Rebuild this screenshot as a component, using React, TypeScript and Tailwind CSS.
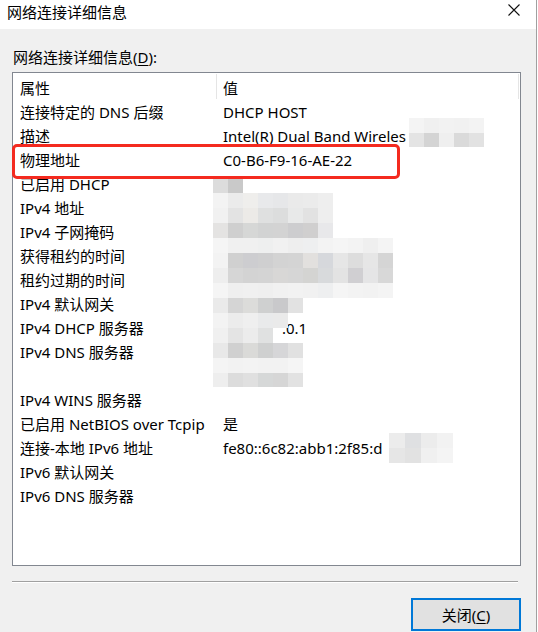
import React from "react";

const font = "font-['Segoe_UI','Noto_Sans','Noto_Sans_CJK_SC',sans-serif]";

const rows: [string, string][] = [
  ["连接特定的 DNS 后缀", "DHCP HOST"],
  ["描述", "Intel(R) Dual Band Wireles"],
  ["物理地址", "C0-B6-F9-16-AE-22"],
  ["已启用 DHCP", ""],
  ["IPv4 地址", ""],
  ["IPv4 子网掩码", ""],
  ["获得租约的时间", ""],
  ["租约过期的时间", ""],
  ["IPv4 默认网关", ""],
  ["IPv4 DHCP 服务器", ""],
  ["IPv4 DNS 服务器", ""],
  ["", ""],
  ["IPv4 WINS 服务器", ""],
  ["已启用 NetBIOS over Tcpip", "是"],
  ["连接-本地 IPv6 地址", "fe80::6c82:abb1:2f85:d"],
  ["IPv6 默认网关", ""],
  ["IPv6 DNS 服务器", ""],
];

// mosaic blocks over the hidden values: [x, y, cell width, cell height, colours]
const mosaic: [number, number, number, number, string[]][] = [
  [409, 118, 15, 15, ["#f4f4f4", "#f0f0f0", "#f2f2f2", "#f1f1f1", "#f3f3f3"]],
  [409, 133, 15, 14, ["#e4e4e4", "#d4d4d4", "#efefef", "#dadada", "#e2e2e2"]],
  [213, 177, 15, 16, ["#dcdcdc", "#c9c9c9"]],
  [213, 193, 15, 15, ["#f3f3f3", "#ebebeb", "#efeeec", "#e8e9eb", "#e6e7e9", "#eaeaea", "#ebebeb", "#eeeeee"]],
  [213, 208, 15, 15, ["#f1f1f1", "#e3e3e3", "#eceae7", "#dfe0e0", "#dcdddd", "#e8e9e9", "#e2e2e2", "#eeeeee"]],
  [213, 223, 15, 15, ["#e4e3e2", "#cfcfcf", "#d6d7d6", "#d2d3d3", "#d3d3d3", "#cdcdcf", "#d0cfcf", "#e8e8ea"]],
  [213, 238, 15, 15, ["#f5f5f5", "#f0f0f0", "#f0f0f0", "#eeefef", "#f1f1f1", "#eeeeee", "#eeeff0", "#f3f3f3", "#f5f5f5", "#f3f3f3", "#efefef", "#f4f4f4"]],
  [213, 253, 15, 15, ["#f3f3f3", "#d0d0d0", "#cdcdd0", "#cfcfd0", "#d3d3d3", "#d4d4d4", "#e2e0de", "#d6d8dc", "#e6e6e6", "#dddddd", "#e6e6e6", "#d5d5d5"]],
  [213, 268, 15, 15, ["#eeeeee", "#d6d6d6", "#d3d3d3", "#d4d4d4", "#d8d7d6", "#d6d6d6", "#d4d4d2", "#d8dadc", "#e3e3e3", "#d0cfd2", "#e5e5e6", "#d8d8d8"]],
  [213, 283, 15, 15, ["#f5f5f5", "#efefef", "#f0f0f0", "#efefef", "#f1f1f1", "#f2f2f2", "#f1f1f1", "#eeeff0", "#f5f5f5", "#f3f3f3", "#f2f2f2", "#f4f4f4"]],
  [213, 298, 15, 15, ["#eaeaea", "#d5d5d5", "#dcdcda", "#cfd0d0", "#c9c9cb", "#e2e2e2"]],
  [213, 313, 15, 15, ["#f3f3f3", "#ececec", "#efefef", "#e9eaeb", "#eaeaea"]],
  [213, 328, 15, 15, ["#f0f0f0", "#e4e4e4", "#ececec", "#e0e1e1"]],
  [213, 343, 15, 15, ["#e8e8e8", "#d0d0d0", "#dadad8", "#cfd0d0", "#d6d6d8", "#e1e1e1"]],
  [213, 358, 15, 15, ["#f4f4f4", "#f2f2f2", "#f3f3f3", "#f2f2f2", "#f2f2f2", "#f5f5f5"]],
  [213, 373, 15, 14, ["#eeeeee", "#dcdcdc", "#e0e0e0", "#d6d8d8", "#d6d6d6", "#e2e2e2"]],
  [389, 433, 16, 15, ["#ececec", "#dfe0e2", "#ececec", "#f2f2f2"]],
  [389, 448, 16, 15, ["#e6e6e6", "#e2e2e2", "#f0f0f0", "#f4f4f4"]],
];

function Mosaic() {
  return (
    <>
      {mosaic.map(([x, y, w, h, colors], i) =>
        colors.map((c, j) => (
          <div
            key={i + "-" + j}
            className="absolute"
            style={{ left: x + j * w, top: y, width: w, height: h, background: c }}
          />
        ))
      )}
    </>
  );
}

export default function App() {
  return (
    <div className={`relative w-[538px] h-[632px] bg-white text-black overflow-hidden ${font}`}>
      <div className="w-[537px] h-full border-r border-[#a0a0a0] flex flex-col">
        {/* title bar */}
        <div className="h-[29px] bg-white flex items-center justify-between pl-[7px] pr-[16px] shrink-0">
          <span className="text-[15px] leading-[20px] -mt-[5px]">网络连接详细信息</span>
          <svg width="12" height="12" viewBox="0 0 12 12" className="-mt-[9px]">
            <path d="M0.5 0.5 L11.5 11.5 M11.5 0.5 L0.5 11.5" stroke="#111" strokeWidth="1.1" />
          </svg>
        </div>

        {/* body */}
        <div className="flex-1 bg-[#f0f0f0] flex flex-col pl-[12px] pr-[15px]">
          <div className="text-[15px] leading-[20px] pt-[18px] pl-[1px] h-[43px]">
            网络连接详细信息(<span className="underline underline-offset-2">D</span>):
          </div>

          <div className="h-[494px] border border-[#828790] bg-white text-[15px] leading-[24px]">
            <div className="flex h-[27px] items-center pt-[3px]">
              <div className="w-[203px] pl-[7px]">属性</div>
              <div className="w-px h-[25px] -mt-[3px] bg-[#e5e5e5]" />
              <div className="flex-1 pl-[6px]">值</div>
              <div className="w-px h-[25px] -mt-[3px] bg-[#e5e5e5] mr-[1px]" />
            </div>
            {rows.map(([k, v], i) => (
              <div key={i} className="flex h-[24px] items-center">
                <div className="w-[204px] pl-[7px] whitespace-nowrap">{k}</div>
                <div className="flex-1 pl-[6px] whitespace-nowrap overflow-hidden">
                  {i === 9 ? <span className="pl-[59px]">.0.1</span> : v}
                </div>
              </div>
            ))}
          </div>

          <div className="mt-[15px] h-px bg-[#a0a0a0] mr-[3px]" />
          <div className="h-px bg-white mr-[3px]" />

          <div className="flex justify-end mt-[15px]">
            <button className="w-[110px] h-[33px] border-2 border-[#0078d7] bg-[#e1e1e1] text-[15px] leading-[20px]">
              关闭(<span className="underline underline-offset-2">C</span>)
            </button>
          </div>
        </div>
      </div>

      <Mosaic />

      {/* red highlight */}
      <div className="absolute left-[12px] top-[144px] w-[388px] h-[35px] border-[3px] border-[#f42a1f] rounded-[5px]" />
    </div>
  );
}
